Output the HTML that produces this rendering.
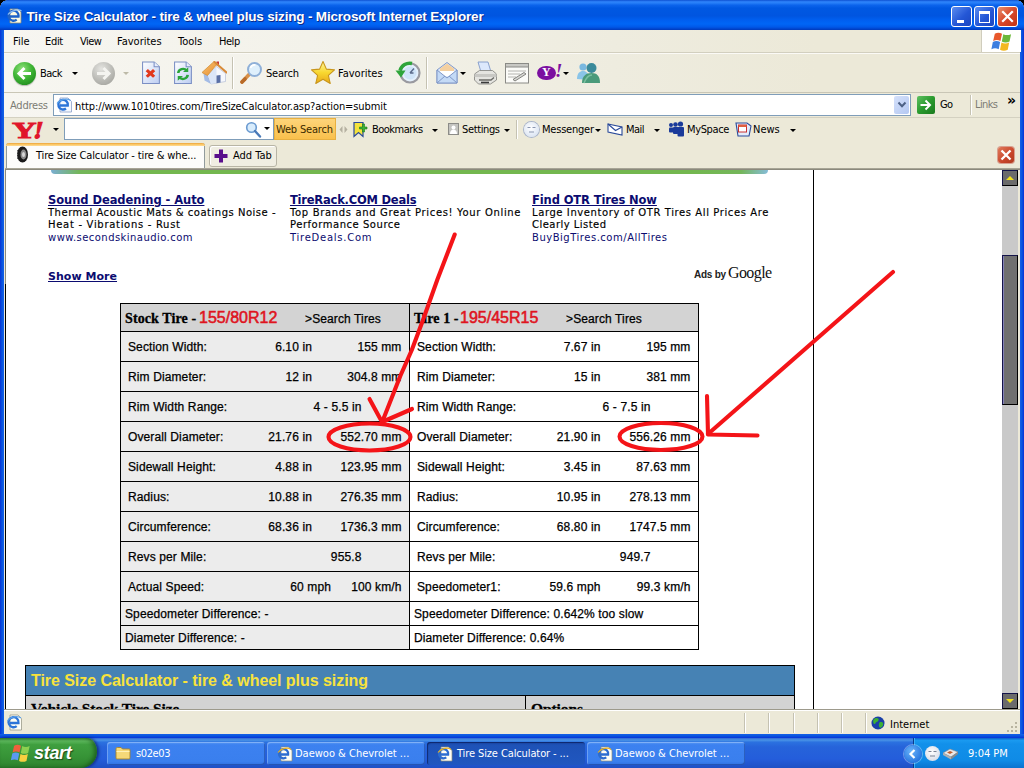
<!DOCTYPE html>
<html>
<head>
<meta charset="utf-8">
<title>Tire Size Calculator - tire &amp; wheel plus sizing - Microsoft Internet Explorer</title>
<style>
html,body{margin:0;padding:0;}
body{width:1024px;height:768px;overflow:hidden;position:relative;background:#ece9d8;font-family:"DejaVu Sans Condensed","DejaVu Sans","Liberation Sans",sans-serif;font-size:11px;color:#000;}
.abs{position:absolute;}
#titlebar{left:0;top:0;width:1024px;height:30px;background:linear-gradient(to bottom,#0a4cce 0%,#2878f2 4%,#2a82fa 9%,#0c64ec 17%,#0058e2 27%,#0055e0 53%,#005ff0 67%,#0066f6 80%,#0058e8 90%,#0042ca 97%,#003ab8 100%);border-radius:7px 7px 0 0;}
#titletext{left:26.500px;top:8.500px;color:#fff;font-family:"Liberation Sans",sans-serif;font-weight:bold;font-size:13.500px;letter-spacing:-0.18px;line-height:16px;white-space:nowrap;text-shadow:1px 1px 0 #0a2a8a;}
#lborder{left:0;top:30px;width:4px;height:709px;background:linear-gradient(to right,#0831d9,#0855dd 50%,#1660e8);}
#rborder{left:1020px;top:30px;width:4px;height:709px;background:linear-gradient(to right,#1660e8,#0855dd 50%,#0831d9);}
#bborder{left:0;top:734px;width:1024px;height:4px;background:linear-gradient(to bottom,#1660e8,#0855dd 50%,#0831d9);}
#menubar{background-image:linear-gradient(to right,#f7f6f1 0%,#f3f2ea 30%,#eeecdf 60%,#ece9d8 80%) !important;left:4px;top:30px;width:1016px;height:22px;background:#ece9d8;}
.menu{top:35px;font-size:11px;white-space:nowrap;}
#toolbar{background-image:linear-gradient(to right,#f7f6f1 0%,#f3f2ea 30%,#eeecdf 60%,#ece9d8 80%) !important;left:4px;top:53px;width:1016px;height:40px;background:#ece9d8;}
#addrbar{background-image:linear-gradient(to right,#f7f6f1 0%,#f3f2ea 30%,#eeecdf 60%,#ece9d8 80%) !important;left:4px;top:93px;width:1016px;height:25px;background:#ece9d8;}
#ybar{left:4px;top:118px;width:1016px;height:24px;background:#ece9d8;}
#tabbar{left:4px;top:142px;width:1016px;height:28px;background:#ece9d8;}
#content{left:5px;top:170px;width:997px;height:540px;background:#fff;overflow:hidden;}
#statusbar{left:4px;top:710px;width:1016px;height:24px;background:#ece9d8;}
#taskbar{left:0;top:738px;width:1024px;height:30px;background:linear-gradient(to bottom,#3168d5 0%,#4993e6 7%,#2b71e0 14%,#2663da 30%,#245ddb 70%,#1f50c4 100%);}

.t{position:absolute;white-space:nowrap;font-size:11px;line-height:13px;}
.dd{position:absolute;width:0;height:0;border-left:3px solid transparent;border-right:3px solid transparent;border-top:3.5px solid #000;margin-left:-0.5px;}
.sep{position:absolute;width:1px;background:#c5c2b2;border-right:1px solid #fff;}
.tbtn{position:absolute;width:21px;height:21px;border-radius:3px;border:1px solid #fff;box-sizing:border-box;}

#pg{position:absolute;left:-5px;top:-170px;width:1024px;height:768px;}
#pg .a{position:absolute;white-space:nowrap;}
.adh{font-family:"DejaVu Sans","Liberation Sans",sans-serif;font-weight:bold;font-size:11.5px;color:#0b0b70;text-decoration:underline;line-height:14px;}
.adt{font-family:"DejaVu Sans","Liberation Sans",sans-serif;font-size:10px;letter-spacing:0.5px;color:#000;-webkit-text-stroke:0.15px #000;line-height:12px;}
.adu{font-family:"DejaVu Sans","Liberation Sans",sans-serif;font-size:10px;letter-spacing:0.5px;color:#0b0b70;line-height:12px;}
.tc{font-family:"Liberation Sans",sans-serif;font-size:12px;letter-spacing:0.12px;color:#000;line-height:14px;-webkit-text-stroke:0.25px #000;}
.tr{text-align:right;}
.hl{position:absolute;height:1px;background:#000;}
.vl{position:absolute;width:1px;background:#000;}
.hs{font-family:"Liberation Serif",serif;font-weight:bold;font-size:14px;line-height:16px;color:#000;-webkit-text-stroke:0.3px #000;letter-spacing:0.1px;}
.hr{font-family:"Liberation Sans",sans-serif;font-size:16px;line-height:18px;color:#df141e;-webkit-text-stroke:0.55px #df141e;}

.tk{position:absolute;top:742px;height:23px;width:158px;border-radius:3px;box-sizing:border-box;background:linear-gradient(to bottom,#5a9af5 0%,#3c81f0 12%,#3a7fee 85%,#2f6fe0 100%);box-shadow:inset 1px 1px 0 rgba(255,255,255,.25),inset -1px -1px 0 rgba(0,0,40,.25);}
.tk.act{background:linear-gradient(to bottom,#1a48a8 0%,#1e52b7 15%,#2057c0 100%);box-shadow:inset 1px 1px 1px rgba(0,0,40,.5);}
.tkt{position:absolute;top:747px;color:#fff;font-size:11px;line-height:13px;white-space:nowrap;}
.sbsep{position:absolute;top:713px;width:1px;height:20px;background:#c5c2b2;border-right:1px solid #fff;}
</style>
</head>
<body>
<!-- ===== window frame ===== -->
<div id="titlebar" class="abs"></div>
<div class="abs" style="left:0;top:0;width:7px;height:7px;background:radial-gradient(circle at 7px 7px,transparent 6.5px,#000 7px);"></div>
<div class="abs" style="left:1017px;top:0;width:7px;height:7px;background:radial-gradient(circle at 0 7px,transparent 6.5px,#000 7px);"></div>
<svg class="abs" style="left:6.500px;top:8px" width="16" height="16" viewBox="0 0 16 16"><path d="M3 1h8l3 3v11H3z" fill="#fbfbe4" stroke="#8a8a7a" stroke-width=".8"/><path d="M3.0 8.5h8.5a5.0 5.0 0 1 0 -1.800 3.1" fill="none" stroke="#1c62c8" stroke-width="2.300" stroke-linecap="butt"/><path d="M1 6.5C4 2 12 1 14.5 3" fill="none" stroke="#8cbcf4" stroke-width="1.2"/></svg>
<div id="titletext" class="abs">Tire Size Calculator - tire &amp; wheel plus sizing - Microsoft Internet Explorer</div>
<div class="tbtn" style="left:951px;top:6px;background:linear-gradient(135deg,#5c8df0,#2457d6 55%,#1c46c0);"><div class="abs" style="left:5px;top:13px;width:7px;height:3px;background:#fff"></div></div>
<div class="tbtn" style="left:974px;top:6px;background:linear-gradient(135deg,#5c8df0,#2457d6 55%,#1c46c0);"><div class="abs" style="left:4px;top:4px;width:9px;height:8px;border:1px solid #fff;border-top:3px solid #fff;"></div></div>
<div class="tbtn" style="left:997px;top:6px;background:linear-gradient(135deg,#e8906e,#d8482a 50%,#c23312);"><svg class="abs" style="left:0;top:0" width="19" height="19" viewBox="0 0 19 19"><path d="M5 5l9 9M14 5l-9 9" stroke="#fff" stroke-width="2.2" stroke-linecap="square"/></svg></div>
<div id="lborder" class="abs"></div>
<div id="rborder" class="abs"></div>

<!-- ===== menu bar ===== -->
<div id="menubar" class="abs"></div>
<div class="t" style="left:13px;top:35px">File</div>
<div class="t" style="left:45px;top:35px;letter-spacing:-0.324px">Edit</div>
<div class="t" style="left:80px;top:35px;letter-spacing:-0.556px">View</div>
<div class="t" style="left:117px;top:35px">Favorites</div>
<div class="t" style="left:178px;top:35px">Tools</div>
<div class="t" style="left:219px;top:35px;letter-spacing:-0.459px">Help</div>
<div class="abs" style="left:981px;top:30px;width:39px;height:22px;background:#fff;border-left:1px solid #d0cdbd;"></div>
<svg class="abs" style="left:990px;top:31px" width="24" height="21" viewBox="0 0 20 19"><path d="M3.5 2.5c2.5-1.5 4.5-1 6.5 0L8.6 9C6.600 8 4.600 7.600 2 9z" fill="#e8582c"/><path d="M11.200 2.900c2 1 4.500 1.200 7 0L16.800 9.500c-2.500 1.200-5 1-7 0z" fill="#6cb83a"/><path d="M1.700 10c2.500-1.400 4.600-1 6.600 0L7 16.500c-2-1-4.100-1.300-6.600 0z" fill="#3c7ee0"/><path d="M9.500 10.500c2 1 4.500 1.200 7 0L15.200 17c-2.500 1.200-5 1-7 0z" fill="#f2b820"/></svg>
<div class="abs" style="left:4px;top:52px;width:1016px;height:1px;background:#d2cfbf;"></div><div class="abs" style="left:4px;top:53px;width:1016px;height:1px;background:#fbfaf6;z-index:2"></div>

<!-- ===== main toolbar ===== -->
<div id="toolbar" class="abs"></div>
<div class="abs" style="left:13px;top:62px;width:23px;height:23px;border-radius:12px;background:radial-gradient(circle at 40% 30%,#8fe27a 0%,#3fb535 45%,#1f8a1c 85%,#176c15 100%);box-shadow:0 1px 1px rgba(0,0,0,.25);"></div>
<svg class="abs" style="left:13px;top:62px" width="23" height="23" viewBox="0 0 23 23"><path d="M18 11.500H7M11.500 6L6 11.500l5.500 5.500" fill="none" stroke="#fff" stroke-width="3" stroke-linejoin="miter"/></svg>
<div class="t" style="left:40px;top:67px;letter-spacing:-0.510px">Back</div>
<div class="dd" style="left:72px;top:72px"></div>
<div class="abs" style="left:92px;top:62px;width:23px;height:23px;border-radius:12px;background:radial-gradient(circle at 40% 30%,#e4e4e0 0%,#bdbdb8 50%,#a2a29c 90%);"></div>
<svg class="abs" style="left:92px;top:62px" width="23" height="23" viewBox="0 0 23 23"><path d="M5 11.500h11M11.500 6l5.500 5.500-5.500 5.500" fill="none" stroke="#f4f4f0" stroke-width="3"/></svg>
<div class="dd" style="left:123px;top:72px;border-top-color:#bdbaa8"></div>
<svg class="abs" style="left:140.5px;top:61px" width="21" height="24" viewBox="0 0 20 25" preserveAspectRatio="none"><defs><linearGradient id="pg1" x1="0" y1="0" x2="1" y2="1"><stop offset="0" stop-color="#fff"/><stop offset="1" stop-color="#bccdf2"/></linearGradient></defs><path d="M1.500 1h11l5 5v17.500h-16z" fill="url(#pg1)" stroke="#7b8fc4" stroke-width="1"/><path d="M12.500 1v5h5" fill="#e8eefc" stroke="#7b8fc4" stroke-width="1"/><path d="M5.500 9.500l7 7M12.500 9.500l-7 7" stroke="#e2381c" stroke-width="3"/></svg>
<svg class="abs" style="left:172.500px;top:61px" width="21" height="24" viewBox="0 0 20 25" preserveAspectRatio="none"><defs><linearGradient id="pg2" x1="0" y1="0" x2="1" y2="1"><stop offset="0" stop-color="#fff"/><stop offset="1" stop-color="#bccdf2"/></linearGradient></defs><path d="M1.500 1h11l5 5v17.500h-16z" fill="url(#pg2)" stroke="#7b8fc4" stroke-width="1"/><path d="M12.500 1v5h5" fill="#e8eefc" stroke="#7b8fc4" stroke-width="1"/><path d="M5 12.500a4.500 4.500 0 0 1 8-2.500" fill="none" stroke="#2aa53a" stroke-width="2.400"/><path d="M14.500 6.500v5h-5z" fill="#2aa53a"/><path d="M14 14.500a4.500 4.500 0 0 1-8 2.500" fill="none" stroke="#2aa53a" stroke-width="2.400"/><path d="M4.500 20.500v-5h5z" fill="#2aa53a"/></svg>
<svg class="abs" style="left:201px;top:60px" width="26" height="26" viewBox="0 0 26 26"><defs><linearGradient id="rf" x1="0" y1="0" x2="1" y2="1"><stop offset="0" stop-color="#f8c070"/><stop offset="1" stop-color="#e89030"/></linearGradient></defs><path d="M15.500 1.500h2.500v4h-2.500z" fill="#c83838"/><path d="M2.500 13L7 15.500l3 8.500-6.500-3.500z" fill="#a4bce6"/><path d="M7 15.500L15.500 6.500l9 7v8L10 24z" fill="#f6f8fd" stroke="#a8b4d0" stroke-width=".6"/><path d="M7 15.500L15.500 6.500V23L10 24z" fill="#dbe6f8"/><path d="M15.500 15.500l4-.5v7.500l-4 .7z" fill="#5a70a6"/><path d="M1 12.500L13 1.500l3.500 2L6.500 15.500z" fill="url(#rf)" stroke="#cf8a30" stroke-width=".7"/><path d="M13.500 2L25.500 12.500" stroke="#d88a38" stroke-width="2" stroke-linecap="round"/></svg>
<div class="sep" style="left:232px;top:57px;height:32px"></div>
<svg class="abs" style="left:238px;top:60px" width="26" height="26" viewBox="0 0 26 26"><path d="M4 22l8-8.500" stroke="#d89048" stroke-width="3.600" stroke-linecap="round"/><path d="M4 22l3-3" stroke="#b86a28" stroke-width="3.600" stroke-linecap="round"/><circle cx="16.500" cy="9.500" r="6.500" fill="#dff0fc" stroke="#8fb0d8" stroke-width="2"/><path d="M12.500 8a4.500 4.500 0 0 1 5-3" fill="none" stroke="#fff" stroke-width="1.600"/></svg>
<div class="t" style="left:266px;top:67px;letter-spacing:-0.197px">Search</div>
<svg class="abs" style="left:310px;top:60px" width="26" height="25" viewBox="0 0 26 25"><defs><linearGradient id="st" x1="0" y1="0" x2="0" y2="1"><stop offset="0" stop-color="#fff6a0"/><stop offset=".5" stop-color="#f8d830"/><stop offset="1" stop-color="#e8a818"/></linearGradient></defs><path d="M13 1.500l3.400 7.600 8.100.8-6.100 5.500 1.800 8.100L13 19.300 5.800 23.500l1.800-8.100L1.500 9.900l8.100-.8z" fill="url(#st)" stroke="#c8961c" stroke-width="1.100" stroke-linejoin="round"/></svg>
<div class="t" style="left:338px;top:67px">Favorites</div>
<svg class="abs" style="left:395px;top:60px" width="27" height="26" viewBox="0 0 27 26"><circle cx="15" cy="13" r="9.500" fill="#e4f0fc" stroke="#9a9aa0" stroke-width="2.200"/><circle cx="15" cy="13" r="6.500" fill="#cfe4f8"/><path d="M15 13l4-4.500M15 13h3.500" stroke="#5a6a8a" stroke-width="1.400"/><path d="M17 3.500a10 10 0 0 0-12 7" fill="none" stroke="#2ea53a" stroke-width="3.400"/><path d="M.500 10.500h10L6 17.500z" fill="#2ea53a"/></svg>
<div class="sep" style="left:426px;top:57px;height:32px"></div>
<svg class="abs" style="left:435px;top:60px" width="24" height="26" viewBox="0 0 24 26"><path d="M2 10L12 2.500 22 10v13H2z" fill="#dbe8fa" stroke="#8098c8" stroke-width="1"/><path d="M5 8.500L12 3.500l7 5v5H5z" fill="#f4d0a0"/><path d="M5 11h14v5H5z" fill="#fff"/><path d="M2 10l10 8 10-8v13H2z" fill="#c4daf6" stroke="#8098c8" stroke-width="1"/><path d="M2 23l8-7M22 23l-8-7" stroke="#8098c8" stroke-width="1"/></svg>
<div class="dd" style="left:460px;top:72px"></div>
<svg class="abs" style="left:473px;top:60px" width="25" height="26" viewBox="0 0 25 26"><path d="M5 2h10l3 10H8z" fill="#dce8fc" stroke="#8098c8" stroke-width=".9"/><path d="M1.500 14l5-3.500h13l4 3.500v6l-6 4h-12l-4-4z" fill="#e4e4e0" stroke="#8a8a86" stroke-width=".9"/><path d="M1.500 14h22v3h-22z" fill="#c8c8c4"/><path d="M6 20h12l3-2.500" fill="none" stroke="#6a6a66" stroke-width="1.400"/><path d="M8 22.500h8" stroke="#3a3a3a" stroke-width="1.600"/></svg>
<svg class="abs" style="left:505px;top:63px" width="24" height="21" viewBox="0 0 24 21"><rect x=".500" y=".500" width="23" height="19.500" fill="#fbfbf8" stroke="#8a8a86"/><rect x=".500" y=".500" width="23" height="3.500" fill="#c8c8c4" stroke="#8a8a86"/><path d="M3 8h18M3 11h12M3 14h8" stroke="#b4b4b0" stroke-width="1"/><path d="M8 16.500l11-7 2 1.500-11 7z" fill="#d8d8d4" stroke="#6a6a66" stroke-width=".8"/></svg>
<div class="abs" style="left:537px;top:66px;width:19px;height:14px;border-radius:9px/7px;background:#7b0fa0;"></div>
<div class="abs" style="left:542px;top:65px;color:#fff;font-family:'Liberation Serif',serif;font-weight:bold;font-size:12px;line-height:15px;">Y</div>
<div class="abs" style="left:555px;top:60px;color:#7b0fa0;font-family:'Liberation Serif',serif;font-weight:bold;font-style:italic;font-size:19px;line-height:22px;">!</div>
<div class="dd" style="left:563px;top:72px"></div>
<svg class="abs" style="left:575px;top:61px" width="26" height="24" viewBox="0 0 26 24"><circle cx="8" cy="6" r="3.600" fill="#7ab8e0"/><path d="M2 18c0-6 3-8 6-8s5 2 6 5v4z" fill="#8ac4e8"/><circle cx="16.500" cy="7" r="5" fill="#3a8a9a"/><path d="M7 22c0-7 4-10 9.500-10S25 15 25 22z" fill="#4a9a7a"/><path d="M9 22c2-5 5-8 8-8" fill="none" stroke="#7ac0a0" stroke-width="1.500"/></svg>
<div class="abs" style="left:4px;top:92px;width:1016px;height:1px;background:#c9c6b6;"></div>

<!-- ===== address bar ===== -->
<div id="addrbar" class="abs"></div>
<div class="t" style="left:10px;top:99px;color:#7c7c74;letter-spacing:-0.229px">Address</div>
<div class="abs" style="left:53px;top:94px;width:858px;height:22px;box-sizing:border-box;background:#fff;border:1px solid #7f9db9;"></div>
<svg class="abs" style="left:56px;top:97px" width="17" height="16" viewBox="0 0 17 16"><path d="M4 1h8l3.500 3.500V15H4z" fill="#f4f8ff" stroke="#8aa0c8" stroke-width=".8"/><path d="M3.7 8.5h8.1a4.8 4.8 0 1 0 -1.800 3.0" fill="none" stroke="#2c74d8" stroke-width="2.300" stroke-linecap="butt"/><path d="M1 6.500C4 2 12 1 14.500 3.500" fill="none" stroke="#5aa0e8" stroke-width="1.100"/></svg>
<div class="t" style="left:75px;top:100px;letter-spacing:-0.1px">http://www.1010tires.com/TireSizeCalculator.asp?action=submit</div>
<div class="abs" style="left:894px;top:96px;width:15px;height:18px;background:linear-gradient(135deg,#d5e1fb,#b4c8f2);border-radius:2px;"></div>
<svg class="abs" style="left:897px;top:101px" width="10" height="8" viewBox="0 0 10 8"><path d="M1.500 1.500l3.500 3.800 3.500-3.800" fill="none" stroke="#4d6185" stroke-width="2"/></svg>
<div class="abs" style="left:917px;top:96px;width:18px;height:18px;border-radius:2px;background:linear-gradient(135deg,#5fc162,#2a9a2e 50%,#1a7a1e);"></div>
<svg class="abs" style="left:917px;top:96px" width="18" height="18" viewBox="0 0 18 18"><path d="M3.500 9h9M8.500 4.500l4.500 4.500-4.500 4.500" fill="none" stroke="#fff" stroke-width="2"/></svg>
<div class="t" style="left:940px;top:98px;letter-spacing:-0.7px">Go</div>
<div class="sep" style="left:970px;top:95px;height:20px"></div>
<div class="t" style="left:975px;top:98px;color:#7c7c74;letter-spacing:-0.605px">Links</div>
<div class="t" style="left:1007px;top:92px;font-weight:bold;font-size:14px;line-height:16px;letter-spacing:-1px;font-family:'DejaVu Sans',sans-serif">&#187;</div>
<div class="abs" style="left:4px;top:117px;width:1016px;height:1px;background:#d4d1c1;"></div>

<!-- ===== yahoo toolbar ===== -->
<div id="ybar" class="abs"></div>
<div class="abs" style="left:12px;top:118px;color:#e0162a;font-family:'Liberation Serif',serif;font-weight:bold;font-size:24px;line-height:24px;-webkit-text-stroke:0.9px #e0162a;transform:scale(1.42,1);transform-origin:left top;">Y</div>
<div class="abs" style="left:32px;top:118px;color:#e0162a;font-family:'Liberation Serif',serif;font-weight:bold;font-size:24px;line-height:24px;-webkit-text-stroke:1.2px #e0162a;transform:skewX(-12deg) scale(1.05,1);transform-origin:left bottom;">!</div>
<div class="dd" style="left:53px;top:128px"></div>
<div class="abs" style="left:64px;top:118px;width:210px;height:22px;box-sizing:border-box;background:#fff;border:1px solid #7f9db9;"></div>
<svg class="abs" style="left:245px;top:121px" width="17" height="17" viewBox="0 0 17 17"><circle cx="6.500" cy="6.500" r="4.800" fill="#d8ecfc" stroke="#6a9ad0" stroke-width="1.600"/><path d="M10 10l5 5.500" stroke="#4a7ab8" stroke-width="2.400" stroke-linecap="round"/></svg>
<div class="dd" style="left:264px;top:127px"></div>
<div class="abs" style="left:274px;top:118px;width:62px;height:22px;box-sizing:border-box;background:linear-gradient(to bottom,#fdd47a,#f9c04c);border:1px solid #e8b040;"></div>
<div class="t" style="left:276px;top:123px;color:#3a2a00;letter-spacing:-0.182px">Web Search</div>
<svg class="abs" style="left:339px;top:125px" width="9" height="9" viewBox="0 0 9 9"><path d="M3.500 1L.500 4.500l3 3.500zM5.500 1l3 3.500-3 3.500z" fill="#b4b0a0"/></svg>
<svg class="abs" style="left:352px;top:121px" width="17" height="18" viewBox="0 0 17 18"><path d="M2 1.500h9v14l-4.500-4-4.500 4z" fill="#f4e23c" stroke="#2a4a9a" stroke-width="1.200"/><path d="M9.500 4.500h3v-3h2v3h2.500v2H14.500v3h-2v-3h-3z" fill="#3cb034" stroke="#1a7a1a" stroke-width=".6" transform="translate(-2,1.500)"/></svg>
<div class="t" style="left:372px;top:123px;letter-spacing:-0.512px">Bookmarks</div>
<div class="dd" style="left:432px;top:129px"></div>
<svg class="abs" style="left:448px;top:123px" width="11" height="12" viewBox="0 0 11 12"><rect x=".500" y=".500" width="10" height="11" fill="#c4c4c0" stroke="#8c8c88"/><circle cx="5.500" cy="4.500" r="2" fill="#fff"/><path d="M2 11c0-3 1.500-4.500 3.500-4.500S9 8 9 11z" fill="#fff"/></svg>
<div class="t" style="left:462px;top:123px;letter-spacing:-0.373px">Settings</div>
<div class="dd" style="left:504px;top:129px"></div>
<div class="sep" style="left:516px;top:120px;height:19px"></div>
<div class="abs" style="left:524px;top:122px;width:15px;height:15px;border-radius:8px;background:radial-gradient(circle at 45% 40%,#fff,#dde6f4 70%,#a8b8d4);box-shadow:0 0 0 1px #a8b4cc;"></div>
<svg class="abs" style="left:524px;top:122px" width="15" height="15" viewBox="0 0 15 15"><path d="M3.500 5.500h3M8.500 5.500h3M5 10h5" stroke="#8a96b0" stroke-width="1"/></svg>
<div class="t" style="left:542px;top:123px;letter-spacing:-0.219px">Messenger</div>
<div class="dd" style="left:595px;top:129px"></div>
<svg class="abs" style="left:607px;top:122px" width="16" height="14" viewBox="0 0 16 14"><path d="M1 2l14 3v8L1 10z" fill="#fff" stroke="#2a4a9a" stroke-width="1.100"/><path d="M1 2l7.500 6.500L15 5" fill="none" stroke="#2a4a9a" stroke-width="1.100"/></svg>
<div class="t" style="left:626px;top:123px;letter-spacing:-0.536px">Mail</div>
<div class="dd" style="left:654px;top:129px"></div>
<svg class="abs" style="left:668px;top:121px" width="16" height="16" viewBox="0 0 16 16"><g fill="#1a3a9a"><circle cx="3" cy="4" r="2"/><rect x="1" y="6.500" width="4.500" height="5" rx="1"/><circle cx="7.500" cy="3.500" r="2.300"/><rect x="5" y="6" width="5.500" height="7" rx="1"/><circle cx="12.500" cy="3" r="2.600"/><rect x="9.500" y="6" width="6.500" height="9.500" rx="1"/></g></svg>
<div class="t" style="left:687px;top:123px;letter-spacing:-0.377px">MySpace</div>
<svg class="abs" style="left:735px;top:121px" width="17" height="16" viewBox="0 0 17 16"><path d="M1 2h11l4 3-2 10H3z" fill="#e4ecfa" stroke="#2a4a9a" stroke-width="1.100"/><rect x="3.500" y="4" width="8" height="7" fill="#fff" stroke="#c83030" stroke-width="1"/><path d="M3.500 4h8v2h-8z" fill="#e06040"/></svg>
<div class="t" style="left:753px;top:123px">News</div>
<div class="dd" style="left:790px;top:129px"></div>

<!-- ===== tab bar ===== -->
<div id="tabbar" class="abs"></div>
<div class="abs" style="left:6px;top:143px;width:199px;height:26px;box-sizing:border-box;background:#fcfcfa;border:1px solid #919b9c;border-bottom:none;border-top:none;border-radius:3px 3px 0 0;"></div>
<div class="abs" style="left:6px;top:143px;width:199px;height:3px;border-radius:3px 3px 0 0;background:linear-gradient(to bottom,#e9a23c,#fbc560 45%,#fddc98);"></div>
<svg class="abs" style="left:15px;top:146px" width="14" height="17" viewBox="0 0 14 17"><ellipse cx="7.500" cy="8.500" rx="5.500" ry="8" fill="#1a1a1a"/><ellipse cx="8.500" cy="8.500" rx="3" ry="5" fill="#8a8a8a"/><ellipse cx="8.500" cy="8.500" rx="1.500" ry="2.600" fill="#d8d8d8"/><path d="M2.500 4v9" stroke="#666" stroke-width="1" stroke-dasharray="1 1"/></svg>
<div class="t" style="left:36px;top:149px;letter-spacing:-0.143px">Tire Size Calculator - tire &amp; whe...</div>
<div class="abs" style="left:209px;top:145px;width:68px;height:22px;box-sizing:border-box;background:#f0eee2;border:1px solid #b8b5a5;border-radius:3px;box-shadow:inset 1px 1px 0 #fff;"></div>
<svg class="abs" style="left:214px;top:149px" width="14" height="14" viewBox="0 0 14 14"><path d="M5 .500h4v4.500h4.500v4H9v4.500H5V9H.500V5H5z" fill="#5a0f8c"/></svg>
<div class="t" style="left:233px;top:149px">Add Tab</div>
<div class="abs" style="left:998px;top:147px;width:16px;height:16px;border-radius:3px;background:linear-gradient(135deg,#e07a5a,#c8452a 60%,#b03a20);box-shadow:0 0 0 1px #d8a090;"></div>
<svg class="abs" style="left:998px;top:147px" width="16" height="16" viewBox="0 0 16 16"><path d="M3.500 3.500l9 9M12.500 3.500l-9 9" stroke="#fff" stroke-width="2.300"/></svg>

<!-- ===== page content ===== -->
<div id="content" class="abs">
<div id="pg">
<div class="a" style="left:51px;top:170px;width:717px;height:4px;background:linear-gradient(to right,#7aaed2 0,#74b65a 28px,#73b74f 60px,#73b74f 640px,#74b65a 690px,#86bcd8 717px);border-radius:0 0 6px 6px;"></div>
<div class="vl" style="left:813px;top:169px;height:541px"></div>
<div class="vl" style="left:5px;top:169px;height:115px;background:#8c8a80"></div><div class="vl" style="left:5px;top:284px;height:426px"></div>
<div class="a adh" style="left:48px;top:193px;letter-spacing:-0.060px">Sound Deadening - Auto</div>
<div class="a adt" style="left:48px;top:207px;letter-spacing:0.509px">Thermal Acoustic Mats &amp; coatings Noise -</div>
<div class="a adt" style="left:48px;top:219px;letter-spacing:0.696px">Heat - Vibrations - Rust</div>
<div class="a adu" style="left:48px;top:232px;letter-spacing:0.447px">www.secondskinaudio.com</div>
<div class="a adh" style="left:290px;top:193px;letter-spacing:-0.222px">TireRack.COM Deals</div>
<div class="a adt" style="left:290px;top:207px;letter-spacing:0.658px">Top Brands and Great Prices! Your Online</div>
<div class="a adt" style="left:290px;top:219px;letter-spacing:0.535px">Performance Source</div>
<div class="a adu" style="left:290px;top:232px;letter-spacing:0.740px">TireDeals.Com</div>
<div class="a adh" style="left:532px;top:193px;letter-spacing:-0.116px">Find OTR Tires Now</div>
<div class="a adt" style="left:532px;top:207px;letter-spacing:0.592px">Large Inventory of OTR Tires All Prices Are</div>
<div class="a adt" style="left:532px;top:219px;letter-spacing:0.460px">Clearly Listed</div>
<div class="a adu" style="left:532px;top:232px;letter-spacing:0.518px">BuyBigTires.com/AllTires</div>
<div class="a adh" style="left:48px;top:270px;font-size:11px;letter-spacing:0.037px">Show More</div>
<div class="a" style="left:694px;top:268px;font-family:'Liberation Sans',sans-serif;font-size:10px;font-weight:bold;color:#222;line-height:14px;letter-spacing:-0.25px">Ads by</div>
<div class="a" style="left:728px;top:263px;font-family:'Liberation Serif',serif;font-size:16px;color:#111;line-height:20px;letter-spacing:-0.6px">Google</div>
<div class="a" style="left:120px;top:303px;width:579px;height:347px;background:#fff"></div>
<div class="a" style="left:120px;top:303px;width:579px;height:29px;background:#d3d3d3"></div>
<div class="a" style="left:120px;top:332px;width:290px;height:318px;background:#ececec"></div>
<div class="hl" style="left:120px;top:303px;width:579px"></div>
<div class="hl" style="left:120px;top:331px;width:579px"></div>
<div class="hl" style="left:120px;top:361px;width:579px"></div>
<div class="hl" style="left:120px;top:391px;width:579px"></div>
<div class="hl" style="left:120px;top:421px;width:579px"></div>
<div class="hl" style="left:120px;top:451px;width:579px"></div>
<div class="hl" style="left:120px;top:481px;width:579px"></div>
<div class="hl" style="left:120px;top:511px;width:579px"></div>
<div class="hl" style="left:120px;top:541px;width:579px"></div>
<div class="hl" style="left:120px;top:571px;width:579px"></div>
<div class="hl" style="left:120px;top:601px;width:579px"></div>
<div class="hl" style="left:120px;top:625px;width:579px"></div>
<div class="hl" style="left:120px;top:649px;width:579px"></div>
<div class="vl" style="left:120px;top:303px;height:347px"></div>
<div class="vl" style="left:409px;top:303px;height:347px"></div>
<div class="vl" style="left:698px;top:303px;height:347px"></div>
<div class="a hs" style="left:125px;top:311px">Stock Tire -</div>
<div class="a hr" style="left:199px;top:309px">155/80R12</div>
<div class="a tc" style="left:305px;top:312px">&gt;Search Tires</div>
<div class="a hs" style="left:414px;top:311px">Tire 1 -</div>
<div class="a hr" style="left:460px;top:309px">195/45R15</div>
<div class="a tc" style="left:566px;top:312px">&gt;Search Tires</div>
<div class="a tc" style="left:128px;top:340px">Section Width:</div>
<div class="a tc tr" style="right:712px;top:340px">6.10 in</div>
<div class="a tc tr" style="right:622.5px;top:340px">155 mm</div>
<div class="a tc" style="left:128px;top:370px">Rim Diameter:</div>
<div class="a tc tr" style="right:712px;top:370px">12 in</div>
<div class="a tc tr" style="right:622.5px;top:370px">304.8 mm</div>
<div class="a tc" style="left:128px;top:400px">Rim Width Range:</div>
<div class="a tc tr" style="right:662.5px;top:400px">4 - 5.5 in</div>
<div class="a tc" style="left:128px;top:430px">Overall Diameter:</div>
<div class="a tc tr" style="right:712px;top:430px">21.76 in</div>
<div class="a tc tr" style="right:622.5px;top:430px">552.70 mm</div>
<div class="a tc" style="left:128px;top:460px">Sidewall Height:</div>
<div class="a tc tr" style="right:712px;top:460px">4.88 in</div>
<div class="a tc tr" style="right:622.5px;top:460px">123.95 mm</div>
<div class="a tc" style="left:128px;top:490px">Radius:</div>
<div class="a tc tr" style="right:712px;top:490px">10.88 in</div>
<div class="a tc tr" style="right:622.5px;top:490px">276.35 mm</div>
<div class="a tc" style="left:128px;top:520px">Circumference:</div>
<div class="a tc tr" style="right:712px;top:520px">68.36 in</div>
<div class="a tc tr" style="right:622.5px;top:520px">1736.3 mm</div>
<div class="a tc" style="left:128px;top:550px">Revs per Mile:</div>
<div class="a tc tr" style="right:662.5px;top:550px">955.8</div>
<div class="a tc" style="left:128px;top:580px">Actual Speed:</div>
<div class="a tc tr" style="right:693px;top:580px">60 mph</div>
<div class="a tc tr" style="right:622.5px;top:580px">100 km/h</div>
<div class="a tc" style="left:417px;top:340px">Section Width:</div>
<div class="a tc tr" style="right:423.5px;top:340px">7.67 in</div>
<div class="a tc tr" style="right:333.5px;top:340px">195 mm</div>
<div class="a tc" style="left:417px;top:370px">Rim Diameter:</div>
<div class="a tc tr" style="right:423.5px;top:370px">15 in</div>
<div class="a tc tr" style="right:333.5px;top:370px">381 mm</div>
<div class="a tc" style="left:417px;top:400px">Rim Width Range:</div>
<div class="a tc tr" style="right:373.5px;top:400px">6 - 7.5 in</div>
<div class="a tc" style="left:417px;top:430px">Overall Diameter:</div>
<div class="a tc tr" style="right:423.5px;top:430px">21.90 in</div>
<div class="a tc tr" style="right:333.5px;top:430px">556.26 mm</div>
<div class="a tc" style="left:417px;top:460px">Sidewall Height:</div>
<div class="a tc tr" style="right:423.5px;top:460px">3.45 in</div>
<div class="a tc tr" style="right:333.5px;top:460px">87.63 mm</div>
<div class="a tc" style="left:417px;top:490px">Radius:</div>
<div class="a tc tr" style="right:423.5px;top:490px">10.95 in</div>
<div class="a tc tr" style="right:333.5px;top:490px">278.13 mm</div>
<div class="a tc" style="left:417px;top:520px">Circumference:</div>
<div class="a tc tr" style="right:423.5px;top:520px">68.80 in</div>
<div class="a tc tr" style="right:333.5px;top:520px">1747.5 mm</div>
<div class="a tc" style="left:417px;top:550px">Revs per Mile:</div>
<div class="a tc tr" style="right:373.5px;top:550px">949.7</div>
<div class="a tc" style="left:417px;top:580px">Speedometer1:</div>
<div class="a tc tr" style="right:423.5px;top:580px">59.6 mph</div>
<div class="a tc tr" style="right:333.5px;top:580px">99.3 km/h</div>
<div class="a tc" style="left:125px;top:607px">Speedometer Difference: -</div>
<div class="a tc" style="left:125px;top:631px">Diameter Difference: -</div>
<div class="a tc" style="left:414px;top:607px">Speedometer Difference: 0.642% too slow</div>
<div class="a tc" style="left:414px;top:631px">Diameter Difference: 0.64%</div>
<div class="a" style="left:25px;top:665px;width:770px;height:31px;box-sizing:border-box;background:#4682b4;border:1px solid #000;"></div>
<div class="a" style="left:31px;top:672px;font-family:'Liberation Sans',sans-serif;font-weight:bold;font-size:16px;line-height:18px;color:#f8e23c;letter-spacing:-0.05px">Tire Size Calculator - tire &amp; wheel plus sizing</div>
<div class="a" style="left:25px;top:695px;width:770px;height:30px;box-sizing:border-box;background:#d3d3d3;border:1px solid #000;"></div>
<div class="vl" style="left:525px;top:695px;height:30px"></div>
<div class="a hs" style="left:31px;top:701px;font-size:15.5px;letter-spacing:-0.1px">Vehicle Stock Tire Size</div>
<div class="a hs" style="left:531px;top:701px;font-size:15.5px;letter-spacing:-0.1px">Options</div>
</div>
</div>
<div class="abs" style="left:1002px;top:170px;width:16px;height:540px;background:#c9c9c9;"></div>
<div class="abs" style="left:1002px;top:170px;width:16px;height:16px;box-sizing:border-box;background:#6b6b6b;border:1px solid #15154a;border-right-color:#000;border-bottom-color:#000;"></div>
<div class="abs" style="left:1006px;top:176px;width:0;height:0;border-left:4px solid transparent;border-right:4px solid transparent;border-bottom:4px solid #f2e11c;"></div>
<div class="abs" style="left:1002px;top:255px;width:16px;height:150px;box-sizing:border-box;background:#707070;border:1px solid #15154a;border-right-color:#000;border-bottom-color:#000;box-shadow:inset 1px 0 0 #8582b8;"></div>
<div class="abs" style="left:1002px;top:693px;width:16px;height:16px;box-sizing:border-box;background:#6b6b6b;border:1px solid #15154a;border-right-color:#000;border-bottom-color:#000;"></div>
<div class="abs" style="left:1006px;top:699px;width:0;height:0;border-left:4px solid transparent;border-right:4px solid transparent;border-top:4px solid #f2e11c;"></div>
<div class="abs" style="left:5px;top:168px;width:1015px;height:2px;background:linear-gradient(to bottom,#b5b2a2,#7d7b70);"></div>
<div class="abs" style="left:1018px;top:170px;width:2px;height:540px;background:#ece9d8;"></div>

<!-- ===== status bar ===== -->
<div id="statusbar" class="abs"></div>
<div class="abs" style="left:4px;top:709px;width:1016px;height:1px;background:#9d9a8c;"></div>
<div class="abs" style="left:4px;top:710px;width:1016px;height:1px;background:#fff;"></div>
<svg class="abs" style="left:6px;top:714px" width="17" height="17" viewBox="0 0 17 17"><path d="M4 1h8l3.500 3.500V16H4z" fill="#fdfdf5" stroke="#9a9a8a" stroke-width=".8"/><path d="M4.0 9.0h8.5a5.0 5.0 0 1 0 -1.800 3.1" fill="none" stroke="#2c74d8" stroke-width="2.300" stroke-linecap="butt"/><path d="M1.500 7C4 2.500 12 1.500 15 4" fill="none" stroke="#5aa0e8" stroke-width="1.100"/></svg>
<div class="sbsep" style="left:744px"></div>
<div class="sbsep" style="left:768px"></div>
<div class="sbsep" style="left:793px"></div>
<div class="sbsep" style="left:817px"></div>
<div class="sbsep" style="left:841px"></div>
<div class="sbsep" style="left:865px"></div>
<svg class="abs" style="left:871px;top:716px" width="14" height="14" viewBox="0 0 15 15"><circle cx="7.500" cy="7.500" r="7" fill="#1a3fa8"/><path d="M3 3.500c2-2 4-1.500 5-.5s-.5 3-2 3.500-1 2.500-2.500 2S2 5 3 3.500zM9 7c1.500-1 3.500-.5 4 1s-1 4-2.500 4.500S8 10 8.500 9z" fill="#3cb034"/></svg>
<div class="t" style="left:890px;top:718px">Internet</div>
<svg class="abs" style="left:1006px;top:721px" width="13" height="13" viewBox="0 0 13 13"><g fill="#b8b4a0"><rect x="9" y="1" width="2" height="2"/><rect x="5" y="5" width="2" height="2"/><rect x="9" y="5" width="2" height="2"/><rect x="1" y="9" width="2" height="2"/><rect x="5" y="9" width="2" height="2"/><rect x="9" y="9" width="2" height="2"/></g></svg>
<div id="bborder" class="abs"></div>

<!-- ===== taskbar ===== -->
<div id="taskbar" class="abs"></div>
<div class="abs" style="left:0;top:738px;width:97px;height:30px;border-radius:0 10px 16px 0 / 0 14px 16px 0;background:linear-gradient(to bottom,#3a8a3a 0%,#5cb85c 10%,#3f9f3f 22%,#379437 60%,#2e832e 100%);box-shadow:inset -3px 0 4px rgba(0,40,0,.45),2px 0 3px rgba(0,0,60,.5);"></div>
<svg class="abs" style="left:10px;top:743px" width="22" height="20" viewBox="0 0 20 19"><path d="M3.500 2.500c2.500-1.500 4.500-1 6.500 0L8.600 9C6.600 8 4.600 7.600 2 9z" fill="#f0603c"/><path d="M11.200 2.900c2 1 4.500 1.200 7 0L16.800 9.500c-2.500 1.200-5 1-7 0z" fill="#8cd050"/><path d="M1.700 10c2.500-1.400 4.600-1 6.600 0L7 16.500c-2-1-4.100-1.300-6.600 0z" fill="#5a9af0"/><path d="M9.500 10.500c2 1 4.500 1.200 7 0L15.200 17c-2.500 1.200-5 1-7 0z" fill="#f8d040"/></svg>
<div class="abs" style="left:34px;top:743px;color:#fff;font-family:'Liberation Sans',sans-serif;font-style:italic;font-weight:bold;font-size:18px;line-height:20px;letter-spacing:-0.3px;text-shadow:1px 1px 1px #1a4a1a;">start</div>
<div class="tk" style="left:107px"></div>
<svg class="abs" style="left:115px;top:746px" width="16" height="14" viewBox="0 0 16 14"><path d="M1 3c0-1 .5-1.500 1.500-1.500H6L7.500 3H14c.8 0 1 .4 1 1v8c0 .7-.3 1-1 1H2c-.7 0-1-.3-1-1z" fill="#f5d978" stroke="#a8842a" stroke-width=".9"/><path d="M1.500 5.500h13" stroke="#fff2b8" stroke-width="1"/></svg>
<div class="tkt" style="left:136px;letter-spacing:-0.388px">s02e03</div>
<div class="tk" style="left:267px"></div>
<svg class="abs" style="left:277px;top:746px" width="16" height="16" viewBox="0 0 16 16"><path d="M4 1h7.500L15 4.500V15H4z" fill="#fdfdf5" stroke="#8a8a7a" stroke-width=".7"/><path d="M3.4 8.5h7.7a4.6 4.6 0 1 0 -1.800 2.9" fill="none" stroke="#2c6cd0" stroke-width="2.300" stroke-linecap="butt"/><path d="M1 6.500C4 2 11.500 1 14 3.500" fill="none" stroke="#e8b020" stroke-width="1.100"/></svg>
<div class="tkt" style="left:295px">Daewoo &amp; Chevrolet ...</div>
<div class="tk act" style="left:427px"></div>
<svg class="abs" style="left:437px;top:746px" width="16" height="16" viewBox="0 0 16 16"><path d="M4 1h7.500L15 4.500V15H4z" fill="#fdfdf5" stroke="#8a8a7a" stroke-width=".7"/><path d="M3.4 8.5h7.7a4.6 4.6 0 1 0 -1.800 2.9" fill="none" stroke="#2c6cd0" stroke-width="2.300" stroke-linecap="butt"/><path d="M1 6.500C4 2 11.500 1 14 3.500" fill="none" stroke="#e8b020" stroke-width="1.100"/></svg>
<div class="tkt" style="left:457px;letter-spacing:-0.109px">Tire Size Calculator - ...</div>
<div class="tk" style="left:587px"></div>
<svg class="abs" style="left:597px;top:746px" width="16" height="16" viewBox="0 0 16 16"><path d="M4 1h7.500L15 4.500V15H4z" fill="#fdfdf5" stroke="#8a8a7a" stroke-width=".7"/><path d="M3.4 8.5h7.7a4.6 4.6 0 1 0 -1.800 2.9" fill="none" stroke="#2c6cd0" stroke-width="2.300" stroke-linecap="butt"/><path d="M1 6.500C4 2 11.500 1 14 3.500" fill="none" stroke="#e8b020" stroke-width="1.100"/></svg>
<div class="tkt" style="left:615px">Daewoo &amp; Chevrolet ...</div>
<div class="abs" style="left:913px;top:738px;width:111px;height:30px;background:linear-gradient(to bottom,#0c5fc8 0%,#1a9af0 8%,#1290ea 20%,#0f8be6 75%,#0b73cf 100%);border-left:1px solid #0a3a8a;box-shadow:inset 1px 0 0 #3ab0f8;"></div>
<div class="abs" style="left:904px;top:745px;width:18px;height:18px;border-radius:9px;background:radial-gradient(circle at 40% 35%,#6ab4fa,#2a78e0 70%,#1a58c0);box-shadow:0 0 0 1px rgba(255,255,255,.35);"></div>
<svg class="abs" style="left:904px;top:745px" width="18" height="18" viewBox="0 0 18 18"><path d="M10.500 5L6.500 9l4 4" fill="none" stroke="#fff" stroke-width="2.200"/></svg>
<div class="abs" style="left:925px;top:746px;width:15px;height:15px;border-radius:8px;background:radial-gradient(circle at 45% 40%,#fff,#d8dde8 75%,#a8b0c4);"></div>
<svg class="abs" style="left:925px;top:746px" width="15" height="15" viewBox="0 0 15 15"><path d="M3.500 5.500h3M8.500 5.500h3M5 10h5" stroke="#7a8294" stroke-width="1"/></svg>
<svg class="abs" style="left:942px;top:747px" width="17" height="13" viewBox="0 0 17 13"><path d="M1 6l7-4 8 3-7 5z" fill="#e8e8e8" stroke="#888" stroke-width=".6"/><path d="M1 6v2l8 4.500V10z" fill="#b0b0b0"/><path d="M9 10l7-5v2l-7 5.500z" fill="#8a8a8a"/><path d="M5 5.500l3-1.500 3 1.200-3 1.800z" fill="#c06030"/></svg>
<div class="tkt" style="left:968px">9:04 PM</div>
<svg class="abs" style="left:0;top:0;pointer-events:none" width="1024" height="768" viewBox="0 0 1024 768"><g fill="none" stroke="#f41418" stroke-width="4.1" stroke-linecap="round" stroke-linejoin="round">
<path d="M454.700 234.500 L437.400 279.500 L423 320 L411.800 350 L400.300 376 L382 422.500"/>
<path d="M369.500 399 L382 422 L412 409"/>
<ellipse cx="369.500" cy="437" rx="41" ry="13.500"/>
<path d="M893 272 L708 434"/>
<path d="M707 396 L708 434.500 L757.500 435.500"/>
<ellipse cx="661" cy="436.500" rx="41.500" ry="13.500"/>
</g></svg>
</body>
</html>
